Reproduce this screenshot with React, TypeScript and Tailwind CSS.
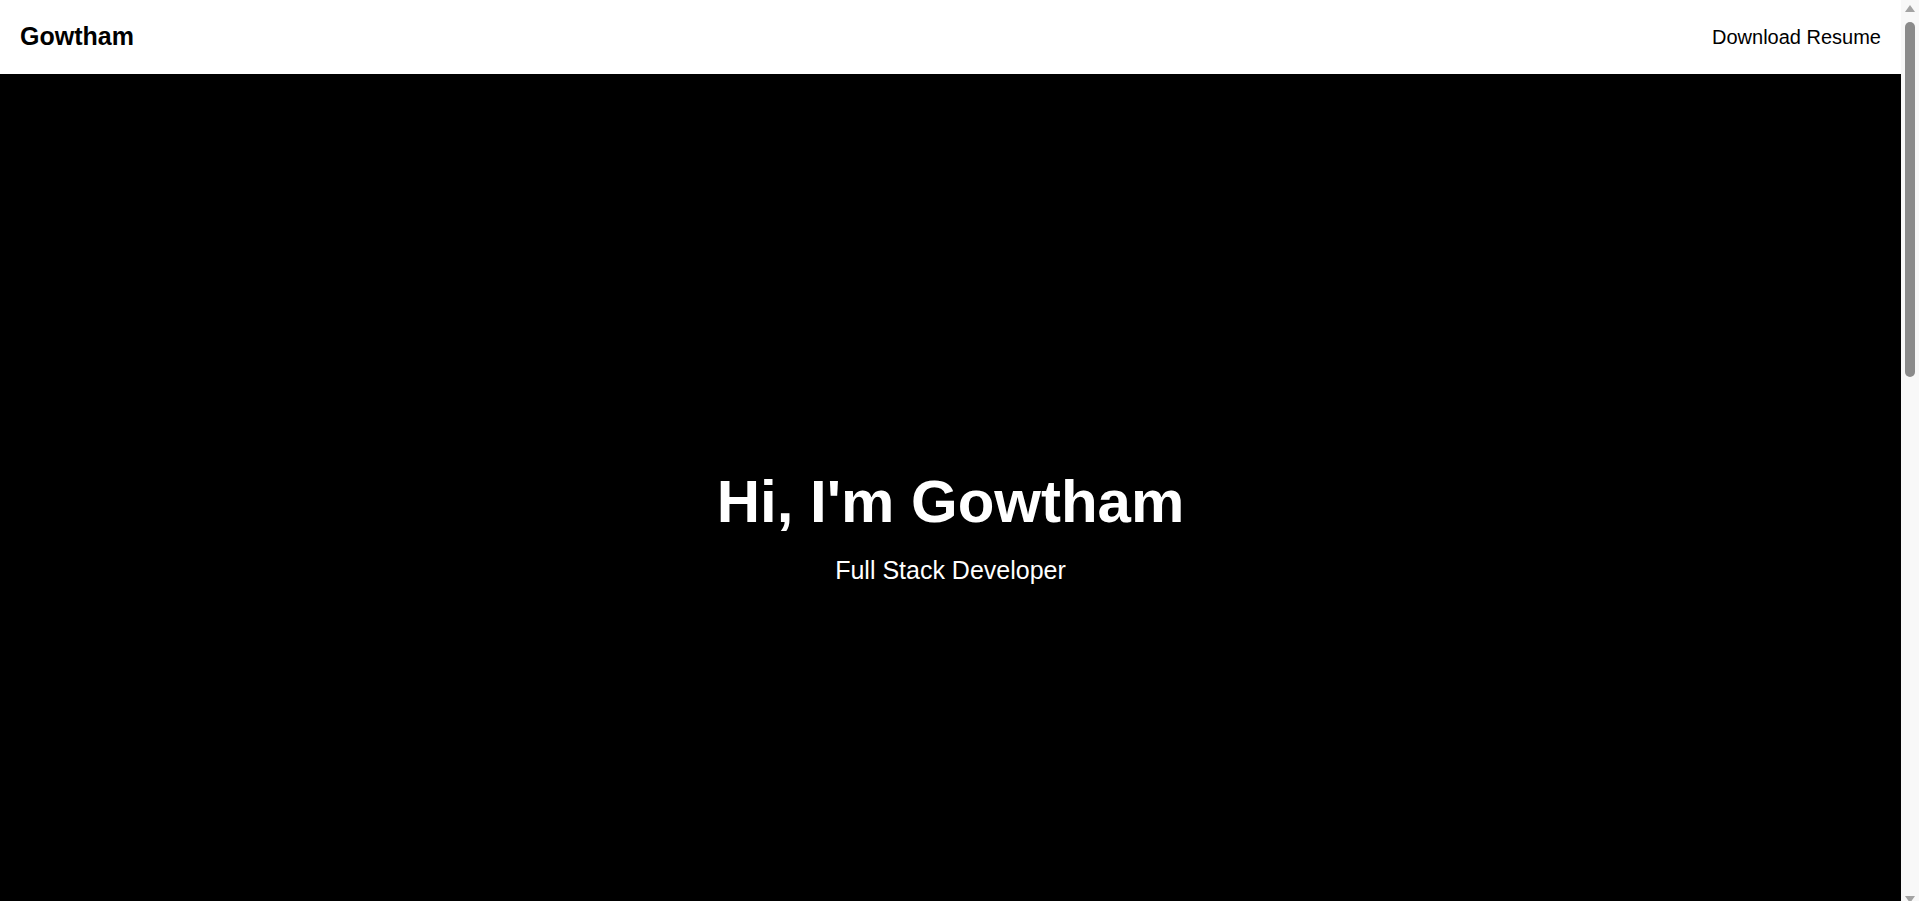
function Header() {
  return (
    <header className="h-[74px] shrink-0 bg-white flex items-center justify-between px-5">
      <h1 className="text-[25px] font-bold text-black">Gowtham</h1>
      <a href="#" className="text-xl text-black">
        Download Resume
      </a>
    </header>
  );
}

function Hero() {
  return (
    <section className="h-[901px] shrink-0 bg-black text-white flex flex-col items-center justify-center pt-2">
      <h2 className="text-6xl font-bold">Hi, I'm Gowtham</h2>
      <p className="text-[25px] leading-8 mt-[22px]">Full Stack Developer</p>
    </section>
  );
}

function ScrollBar() {
  return (
    <div className="w-[18px] shrink-0 h-full bg-[#f8f8f8] flex flex-col overflow-hidden" data-name="scrollbar">
      <div className="h-[17px] flex items-center justify-center">
        <svg width="10" height="7" viewBox="0 0 10 7">
          <path d="M5 0 L10 7 L0 7 Z" fill="#a3a3a3" />
        </svg>
      </div>
      <div className="pt-[5px] pl-[4px]">
        <div className="h-[355px] w-[10px] rounded-full bg-[#8b8b8b]" />
      </div>
      <div className="flex-1" />
      <div className="h-[5px] flex items-start justify-center">
        <svg width="10" height="7" viewBox="0 0 10 7" className="shrink-0">
          <path d="M0 0 L10 0 L5 7 Z" fill="#a3a3a3" />
        </svg>
      </div>
    </div>
  );
}

export default function App() {
  return (
    <div className="h-screen flex overflow-hidden font-['Liberation_Sans',Arial,sans-serif]">
      <div className="flex-1 min-w-0 flex flex-col overflow-hidden">
        <Header />
        <Hero />
      </div>
      <ScrollBar />
    </div>
  );
}
